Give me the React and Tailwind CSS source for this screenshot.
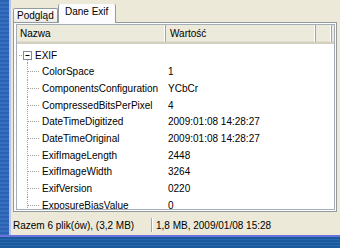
import React from 'react';

const ROWS = [
  { name: "ColorSpace", value: "1" },
  { name: "ComponentsConfiguration", value: "YCbCr" },
  { name: "CompressedBitsPerPixel", value: "4" },
  { name: "DateTimeDigitized", value: "2009:01:08 14:28:27" },
  { name: "DateTimeOriginal", value: "2009:01:08 14:28:27" },
  { name: "ExifImageLength", value: "2448" },
  { name: "ExifImageWidth", value: "3264" },
  { name: "ExifVersion", value: "0220" },
  { name: "ExposureBiasValue", value: "0" },
];

const font = { fontFamily: '"Liberation Sans", Arial, sans-serif' };

// dotted tree connector for a child row
const ChildLines = () => (
  <svg width="25" height="17" className="shrink-0">
    <line x1="10.5" y1="0" x2="10.5" y2="17" stroke="#a0a0a0" strokeDasharray="1 1" />
    <line x1="11" y1="8.5" x2="22" y2="8.5" stroke="#a0a0a0" strokeDasharray="1 1" />
  </svg>
);

// expander box for the EXIF root node
const RootLines = () => (
  <svg width="18" height="17" className="shrink-0">
    <line x1="2" y1="8.5" x2="6" y2="8.5" stroke="#a0a0a0" strokeDasharray="1 1" />
    <line x1="10.5" y1="13" x2="10.5" y2="17" stroke="#a0a0a0" strokeDasharray="1 1" />
    <rect x="6.5" y="4.5" width="8" height="8" fill="#fff" stroke="#7f8a9a" />
    <line x1="8.5" y1="8.5" x2="12.5" y2="8.5" stroke="#000" />
  </svg>
);

const HeaderCell = ({ children, className }) => (
  <div className={`h-full flex items-center border-r border-[#a8a595] shadow-[inset_-1px_0_0_#fff] ${className}`}>
    {children}
  </div>
);

export default function App() {
  return (
    <div className="w-[340px] h-[248px] flex flex-col bg-[#ece9d8] text-[10px] text-black overflow-hidden" style={font}>
      <div className="flex h-[235px]">
        <div className="w-[9px] bg-[repeating-linear-gradient(180deg,#2b62b4_0px,#2b62b4_2px,#3670bf_2px,#3670bf_4px)]" />
        <div className="w-[2px] bg-[#b9c3ec]" />

        <div className="flex-1 flex flex-col pl-[2px]">
          {/* tabs */}
          <div className="flex items-end h-[22px] relative z-10">
            <div className="h-[14px] w-[45px] border border-b-0 border-[#919b9c] rounded-t-[2px] bg-gradient-to-b from-white to-[#ecebe6] flex items-center pl-[3px]">
              Podgląd
            </div>
            <div className="h-[19px] w-[58px] -mb-px border border-b-0 border-[#919b9c] border-t-0 rounded-t-[2px] bg-[#fcfcfe] flex flex-col">
              <div className="h-[1px] bg-[#e68b2c] rounded-t-[2px]" />
              <div className="h-[2px] bg-[#ffc73c]" />
              <div className="flex-1 flex items-center pl-[6px] pb-[4px]">Dane Exif</div>
            </div>
          </div>

          {/* tab page */}
          <div className="h-[190px] mr-[3px] border border-[#919b9c] bg-[#fcfcfe] p-[1px] pl-[2px]">
            <div className="h-full border border-[#a5acb5] bg-white flex flex-col overflow-hidden">
              <div className="h-[19px] shrink-0 flex bg-[#ebeadb] border-b-2 border-[#d3cfbf] shadow-[inset_0_-1px_0_#e2decd]">
                <HeaderCell className="w-[149px] pl-[3px]">Nazwa</HeaderCell>
                <HeaderCell className="w-[150px] pl-[4px]">Wartość</HeaderCell>
                <HeaderCell className="w-[16px]" />
              </div>

              <div className="pt-[3px] flex flex-col">
                <div className="h-[16.67px] flex items-center">
                  <RootLines />
                  <span>EXIF</span>
                </div>
                {ROWS.map((row) => (
                  <div key={row.name} className="h-[16.67px] flex items-center">
                    <div className="w-[151px] shrink-0 flex items-center">
                      <ChildLines />
                      <span className="whitespace-nowrap">{row.name}</span>
                    </div>
                    <span className="whitespace-nowrap">{row.value}</span>
                  </div>
                ))}
              </div>
            </div>
          </div>

          {/* status bar */}
          <div className="flex-1 flex items-center pt-[3px] -ml-[2px]">
            <div className="w-[140px] pl-[2px] whitespace-nowrap">Razem 6 plik(ów), (3,2 MB)</div>
            <div className="self-stretch my-[3px] w-[2px] border-l border-[#aca899] bg-white" />
            <div className="pl-[3px] whitespace-nowrap">1,8 MB, 2009/01/08 15:28</div>
          </div>
        </div>
      </div>

      <div className="h-[2px] bg-[#6a72dc]" />
      <div className="flex-1 bg-[repeating-linear-gradient(180deg,#1c5a9e_0px,#1c5a9e_2px,#2868ab_2px,#2868ab_3px)]" />
    </div>
  );
}
